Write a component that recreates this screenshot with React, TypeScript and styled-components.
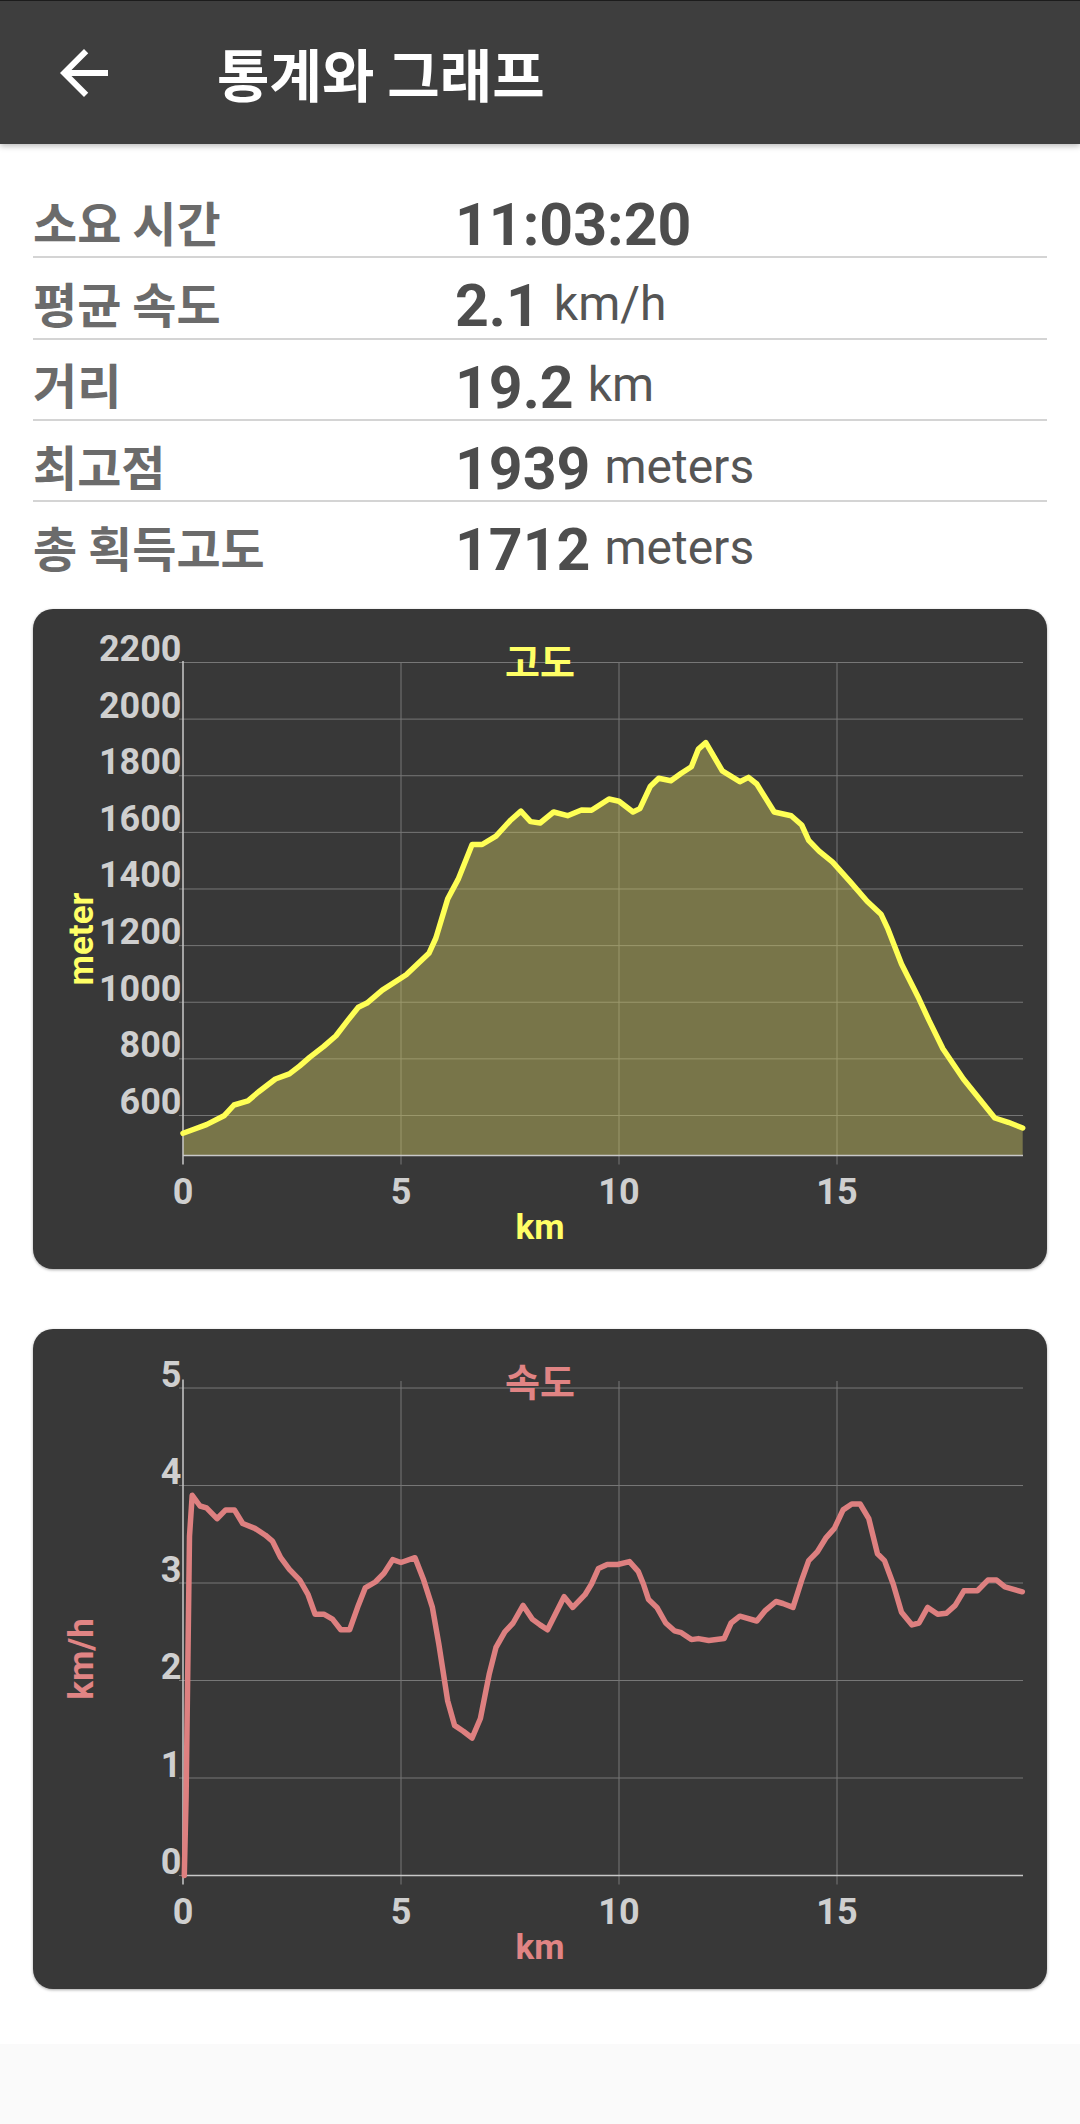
import React from "react";
import styled, { createGlobalStyle } from "styled-components";

const GlobalStyle = createGlobalStyle`
  html, body { margin: 0; padding: 0; background: #fafafa; }
  body { font-family: Roboto, "Noto Sans CJK KR", sans-serif; }
`;

const Page = styled.div`
  width: 1080px;
  display: flex;
  flex-direction: column;
`;

const AppBar = styled.header`
  height: 144px;
  box-sizing: border-box;
  border-top: 1px solid #1c1c1c;
  background: #3e3e3e;
  display: flex;
  align-items: center;
  padding-left: 48px;
  box-shadow: 0 2px 6px rgba(0, 0, 0, 0.28);
  position: relative;
  z-index: 1;
`;

const BackButton = styled.button`
  width: 72px;
  height: 72px;
  padding: 0;
  border: none;
  background: none;
  display: flex;
  align-items: center;
  justify-content: center;
`;

const Title = styled.h1`
  margin: 0 0 0 97px;
  color: #ffffff;
  font: 700 57px "Noto Sans CJK KR", sans-serif;
  line-height: 1;
`;

const Content = styled.main`
  background: #ffffff;
  padding: 33px 33px 55px;
  display: flex;
  flex-direction: column;
`;

const StatList = styled.div`
  display: flex;
  flex-direction: column;
`;

const StatRow = styled.div`
  display: grid;
  grid-template-columns: 422px 1fr;
  align-items: center;
  height: 81.3px;
  box-sizing: border-box;
  padding-top: 8px;
  border-bottom: 2px solid #d4d4d4;
  &:last-child {
    border-bottom-color: transparent;
  }
`;

const Label = styled.div`
  font: 700 48px "Noto Sans CJK KR", sans-serif;
  line-height: 1;
  color: #6b6b6b;
`;

const ValueGroup = styled.div`
  display: flex;
  align-items: center;
  padding-top: 8px;
`;

const Value = styled.span`
  font: 700 59px Roboto, sans-serif;
  line-height: 1;
  color: #4d4d4d;
`;

const Unit = styled.span`
  font: 400 48px Roboto, sans-serif;
  line-height: 1;
  color: #555555;
  margin-left: 14px;
  padding-bottom: 4px;
`;

const ChartCard = styled.section<{ $gap: number }>`
  margin-top: ${(p) => p.$gap}px;
  height: 660px;
  border-radius: 20px;
  background: #383838;
  box-shadow: 0 1px 3px rgba(0, 0, 0, 0.35);
  overflow: hidden;
`;

const ChartSvg = styled.svg`
  display: block;
  width: 100%;
  height: 100%;
`;

const AxisText = styled.text`
  font: 700 36px Roboto, sans-serif;
  fill: #cfcfcf;
`;

const AxisTitle = styled.text<{ $color: string }>`
  font: 700 35px Roboto, sans-serif;
  fill: ${(p) => p.$color};
`;

const ChartTitle = styled.text<{ $color: string }>`
  font: 700 38px "Noto Sans CJK KR", sans-serif;
  fill: ${(p) => p.$color};
`;

const W = 1014;
const H = 660;
const L = 150;
const R = 990;
const B = 546.5;
const PX_PER_KM = 43.6;

type Pt = [number, number];

type ChartProps = {
  data: Pt[];
  yMin: number;
  yMax: number;
  top: number;
  yTicks: number[];
  color: string;
  titleColor: string;
  fill?: string;
  title: string;
  yTitle: string;
};

function Chart({ data, yMin, yMax, top, yTicks, color, titleColor, fill, title, yTitle }: ChartProps) {
  const sx = (km: number) => L + km * PX_PER_KM;
  const sy = (v: number) => B - ((v - yMin) / (yMax - yMin)) * (B - top);
  const line = data.map(([k, v], i) => `${i ? "L" : "M"}${sx(k).toFixed(1)} ${sy(v).toFixed(1)}`).join(" ");
  const area = `${line} L${sx(data[data.length - 1][0]).toFixed(1)} ${B} L${sx(data[0][0]).toFixed(1)} ${B} Z`;
  const xTicks = [0, 5, 10, 15];
  return (
    <ChartSvg viewBox={`0 0 ${W} ${H}`}>
      {yTicks.map((t) => (
        <line key={`h${t}`} x1={L - 4} x2={R} y1={sy(t)} y2={sy(t)} stroke="#777" strokeWidth={1} />
      ))}
      {xTicks.slice(1).map((t) => (
        <line key={`v${t}`} x1={sx(t)} x2={sx(t)} y1={top} y2={B + 9} stroke="#777" strokeWidth={1} />
      ))}
      {fill && <path d={area} fill={fill} />}
      <line x1={L} x2={L} y1={top - 1.5} y2={B + 9} stroke="#c8c8c8" strokeWidth={1.5} />
      <line x1={L} x2={R} y1={B} y2={B} stroke="#c8c8c8" strokeWidth={1.5} />
      <path d={line} fill="none" stroke={color} strokeWidth={5.5} strokeLinejoin="round" strokeLinecap="round" />
      {yTicks.map((t) => (
        <AxisText key={`yl${t}`} x={148.5} y={sy(t) - 1.5} textAnchor="end">
          {t}
        </AxisText>
      ))}
      {xTicks.map((t) => (
        <AxisText key={`xl${t}`} x={sx(t)} y={595} textAnchor="middle">
          {t}
        </AxisText>
      ))}
      <ChartTitle $color={titleColor} x={507} y={50.5} textAnchor="middle" dominantBaseline="central">
        {title}
      </ChartTitle>
      <AxisTitle $color={titleColor} x={507} y={630} textAnchor="middle">
        km
      </AxisTitle>
      <AxisTitle $color={titleColor} transform={`translate(60 330) rotate(-90)`} textAnchor="middle">
        {yTitle}
      </AxisTitle>
    </ChartSvg>
  );
}

const elevation: Pt[] = [
  [0, 537], [0.22, 550], [0.54, 568], [0.94, 599], [1.17, 637], [1.49, 652], [1.73, 683], [2.12, 729],
  [2.44, 747], [2.68, 775], [2.91, 806], [3.23, 844], [3.51, 882], [3.78, 936], [4.02, 982], [4.22, 997],
  [4.57, 1043], [5.12, 1097], [5.64, 1173], [5.8, 1227], [6.07, 1365], [6.31, 1434], [6.63, 1557], [6.86, 1557],
  [7.18, 1587], [7.5, 1641], [7.75, 1675], [7.97, 1638], [8.19, 1633], [8.5, 1672], [8.82, 1659], [9.14, 1679],
  [9.37, 1678], [9.77, 1718], [10.0, 1710], [10.32, 1672], [10.48, 1684], [10.72, 1763], [10.91, 1791],
  [11.19, 1782], [11.43, 1809], [11.66, 1832], [11.82, 1894], [11.99, 1917], [12.37, 1817], [12.77, 1779],
  [12.97, 1794], [13.16, 1771], [13.56, 1672], [13.95, 1659], [14.19, 1626], [14.35, 1572], [14.59, 1534],
  [14.9, 1495], [15.3, 1426], [15.69, 1357], [16.01, 1311], [16.17, 1258], [16.48, 1135], [16.88, 1012],
  [17.11, 936], [17.43, 836], [17.9, 729], [18.3, 652], [18.62, 591], [18.93, 576], [19.26, 556],
];

const speed: Pt[] = [
  [0.03, 0], [0.07, 0.81], [0.11, 2.14], [0.15, 3.48], [0.21, 3.9], [0.39, 3.79], [0.54, 3.77], [0.78, 3.66],
  [0.98, 3.75], [1.18, 3.75], [1.37, 3.61], [1.65, 3.56], [1.89, 3.49], [2.05, 3.43], [2.24, 3.26], [2.44, 3.14],
  [2.68, 3.03], [2.87, 2.88], [3.03, 2.68], [3.23, 2.68], [3.43, 2.63], [3.62, 2.52], [3.82, 2.52], [4.02, 2.77],
  [4.18, 2.95], [4.41, 3.01], [4.61, 3.1], [4.81, 3.24], [5.0, 3.21], [5.32, 3.26], [5.52, 3.03], [5.72, 2.75],
  [5.87, 2.37], [6.07, 1.79], [6.23, 1.54], [6.43, 1.48], [6.63, 1.41], [6.82, 1.61], [7.02, 2.06], [7.18, 2.34],
  [7.38, 2.5], [7.57, 2.59], [7.8, 2.77], [8.01, 2.63], [8.19, 2.57], [8.36, 2.52], [8.54, 2.68], [8.74, 2.86],
  [8.94, 2.75], [9.22, 2.88], [9.37, 2.99], [9.53, 3.15], [9.73, 3.19], [9.97, 3.19], [10.24, 3.22], [10.44, 3.12],
  [10.56, 2.99], [10.68, 2.83], [10.87, 2.75], [11.07, 2.59], [11.27, 2.51], [11.43, 2.49], [11.66, 2.42],
  [11.82, 2.43], [12.06, 2.41], [12.41, 2.43], [12.57, 2.59], [12.77, 2.66], [13.16, 2.61], [13.36, 2.72],
  [13.6, 2.81], [13.76, 2.79], [13.99, 2.75], [14.19, 3.03], [14.35, 3.23], [14.55, 3.32], [14.74, 3.46],
  [14.94, 3.56], [15.14, 3.75], [15.34, 3.81], [15.53, 3.81], [15.73, 3.66], [15.93, 3.3], [16.09, 3.23],
  [16.29, 2.99], [16.48, 2.7], [16.72, 2.57], [16.88, 2.59], [17.08, 2.75], [17.31, 2.68], [17.51, 2.69],
  [17.71, 2.77], [17.91, 2.92], [18.22, 2.92], [18.46, 3.03], [18.66, 3.03], [18.85, 2.96], [19.25, 2.91],
];

const stats: { label: string; value: string; unit?: string }[] = [
  { label: "소요 시간", value: "11:03:20" },
  { label: "평균 속도", value: "2.1", unit: "km/h" },
  { label: "거리", value: "19.2", unit: "km" },
  { label: "최고점", value: "1939", unit: "meters" },
  { label: "총 획득고도", value: "1712", unit: "meters" },
];

export default function App() {
  return (
    <Page>
      <GlobalStyle />
      <AppBar>
        <BackButton aria-label="back">
          <svg width="72" height="72" viewBox="0 0 24 24">
            <path d="M20 11H7.83l5.59-5.59L12 4l-8 8 8 8 1.41-1.41L7.83 13H20v-2z" fill="#ffffff" />
          </svg>
        </BackButton>
        <Title>통계와 그래프</Title>
      </AppBar>
      <Content>
        <StatList>
          {stats.map((s) => (
            <StatRow key={s.label}>
              <Label>{s.label}</Label>
              <ValueGroup>
                <Value>{s.value}</Value>
                {s.unit && <Unit>{s.unit}</Unit>}
              </ValueGroup>
            </StatRow>
          ))}
        </StatList>
        <ChartCard $gap={26}>
          <Chart
            data={elevation}
            yMin={458.7}
            yMax={2200}
            top={53.5}
            yTicks={[600, 800, 1000, 1200, 1400, 1600, 1800, 2000, 2200]}
            color="#ffff55"
            titleColor="#ffff66"
            fill="rgba(200, 192, 95, 0.45)"
            title="고도"
            yTitle="meter"
          />
        </ChartCard>
        <ChartCard $gap={59.5}>
          <Chart
            data={speed}
            yMin={0}
            yMax={5.072}
            top={52}
            yTicks={[0, 1, 2, 3, 4, 5]}
            color="#de8080"
            titleColor="#e08484"
            title="속도"
            yTitle="km/h"
          />
        </ChartCard>
      </Content>
    </Page>
  );
}
